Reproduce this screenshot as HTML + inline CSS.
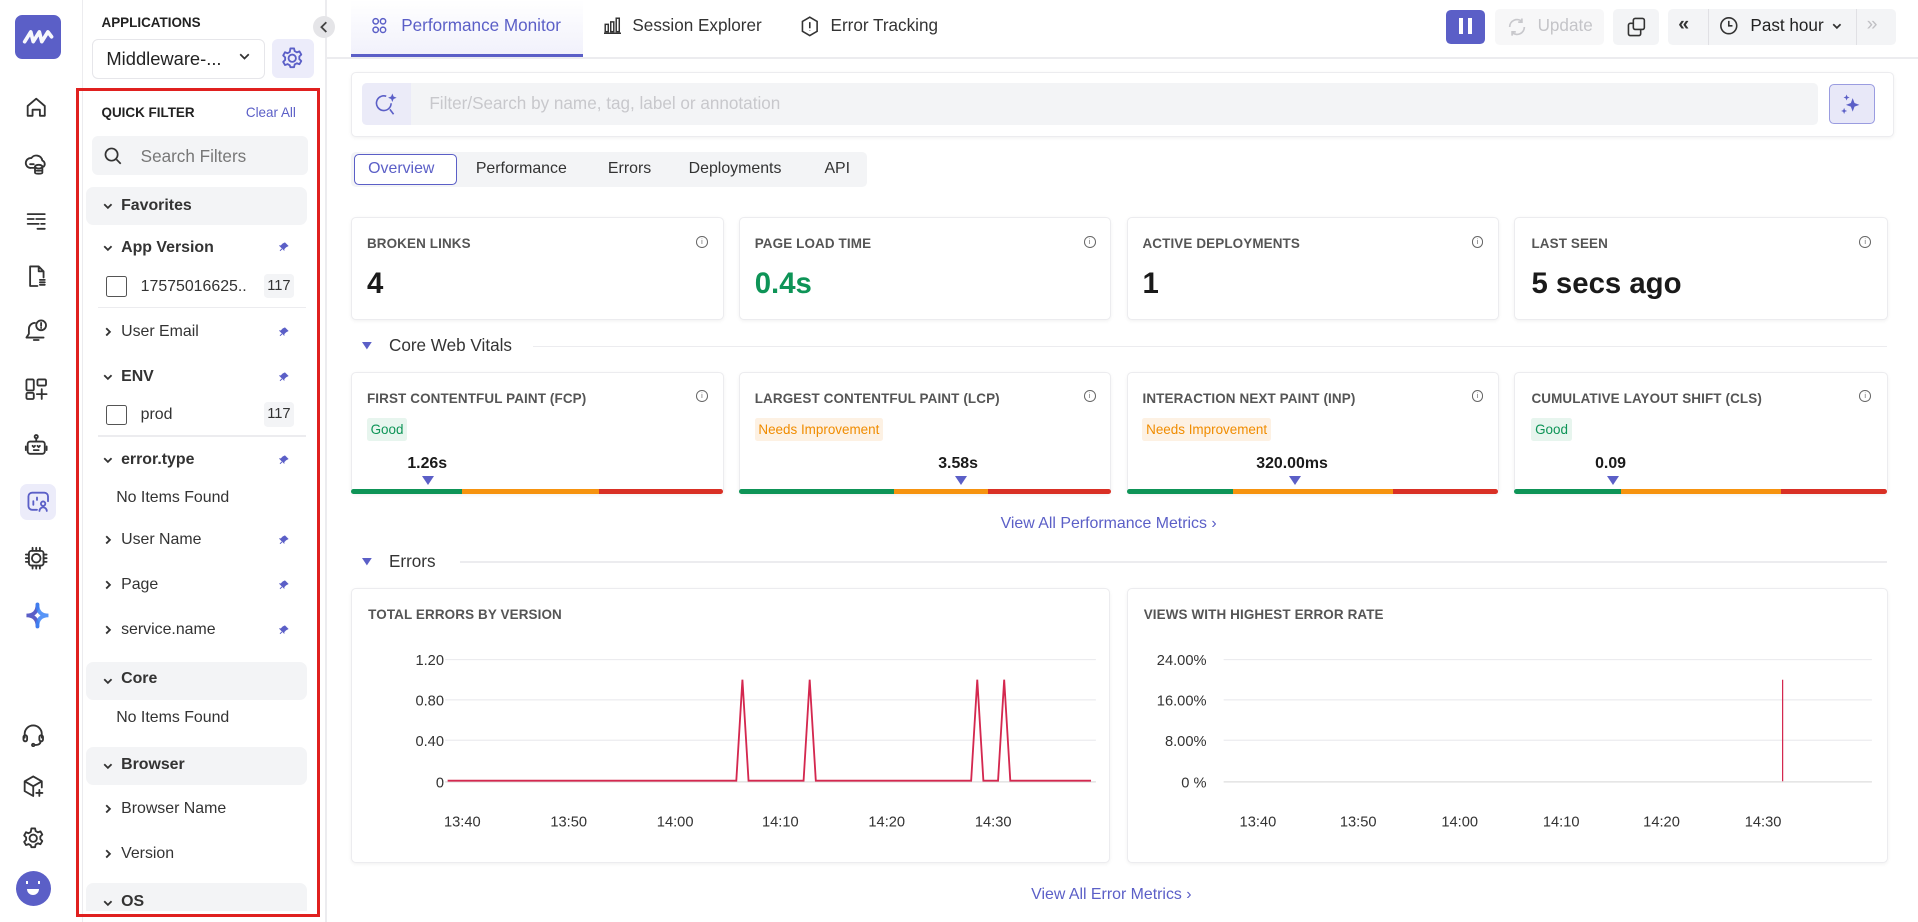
<!DOCTYPE html>
<html><head><meta charset="utf-8">
<style>
html,body{margin:0;padding:0;width:1918px;height:922px;overflow:hidden;background:#fff}
#root{position:relative;width:1568px;height:754px;zoom:1.22321;font-family:"Liberation Sans",sans-serif;color:#222;}
.a{position:absolute}
.t{position:absolute;white-space:nowrap}
.ic{position:absolute;width:20px;height:20px}
.ic svg{width:20px;height:20px;fill:none;stroke:#333;stroke-width:1.5;stroke-linecap:round;stroke-linejoin:round}
.card{position:absolute;background:#fff;border:1px solid #ececef;border-radius:4px;box-shadow:0 1px 3px rgba(0,0,0,0.05)}
.lbl{position:absolute;font-size:11px;font-weight:bold;color:#555;letter-spacing:0.1px}
.info{position:absolute;width:8px;height:8px;border:1px solid #666;border-radius:50%;font-size:6px;line-height:8px;text-align:center;color:#666}
.val{position:absolute;font-size:24px;font-weight:bold;color:#1a1a1a}
.grp{position:absolute;left:70px;width:181px;height:31px;background:#f3f4f6;border-radius:6px}
.fi{position:absolute;font-size:13px;color:#333}
.fb{font-weight:bold}
.chev{position:absolute;font-size:11px;color:#333}
.pin{position:absolute;left:228px;width:8px;height:8px}
.badge{position:absolute;font-size:11px;padding:3px 3px;border-radius:2px}
.bar{position:absolute;height:4px;top:400px}
.mk{position:absolute;top:389px;width:0;height:0;border-left:5px solid transparent;border-right:5px solid transparent;border-top:8px solid #5b5fc7}
.mv{position:absolute;top:372px;font-size:13px;font-weight:bold;color:#1a1a1a}
</style></head><body><div id="root">

<!-- icon bar -->
<div class="a" style="left:67px;top:0;width:1px;height:754px;background:#ececef"></div>
<div class="a" style="left:12px;top:12px;width:38px;height:36px;background:#5b5fc7;border-radius:6px"></div>
<svg class="a" style="left:17px;top:22px" width="28" height="16" viewBox="0 0 28 16"><path d="M3 12 L8 4 L10 12 L15 4 L17 12 L22 4 L25 8" fill="none" stroke="#fff" stroke-width="3" stroke-linecap="round" stroke-linejoin="round" opacity="0.95"/></svg>

<div class="ic" style="left:20px;top:78px"><svg viewBox="0 0 20 20"><path d="M3 17V9l7-6 7 6v8h-4v-5H7v5z"/></svg></div>
<div class="ic" style="left:20px;top:124px"><svg viewBox="0 0 20 20"><path d="M5 13a4 4 0 0 1 1-8 5 5 0 0 1 9 2 3 3 0 0 1 1 5"/><ellipse cx="12" cy="12" rx="3" ry="1.5"/><path d="M9 12v5c0 1 6 1 6 0v-5M9 14.5c0 1 6 1 6 0M5 10h3M5 13h3"/></svg></div>
<div class="ic" style="left:20px;top:170px"><svg viewBox="0 0 20 20"><path d="M3 5h14M3 9h5M10 9h7M3 13h9M14 13h3M11 17h6"/></svg></div>
<div class="ic" style="left:20px;top:216px"><svg viewBox="0 0 20 20"><path d="M12 2H5v16h6M12 2l4 4v5M12 2v4h4M13 13h4M13 15h4M13 17h4"/></svg></div>
<div class="ic" style="left:20px;top:260px"><svg viewBox="0 0 20 20"><path d="M9 4a5 5 0 0 0-5 5v4l-2 3h14M8 18h4"/><circle cx="14" cy="6" r="4"/><path d="M14 4v2.5M14 8v.2"/></svg></div>
<div class="ic" style="left:20px;top:308px"><svg viewBox="0 0 20 20"><rect x="2" y="2" width="6" height="9" rx="1"/><rect x="2" y="13" width="6" height="5" rx="1"/><rect x="11" y="2" width="7" height="5" rx="1"/><path d="M14.5 10v8M10.5 14h8"/></svg></div>
<div class="ic" style="left:20px;top:354px"><svg viewBox="0 0 20 20"><rect x="3" y="7" width="14" height="10" rx="2"/><circle cx="10" cy="3" r="1.3"/><path d="M10 4.3V7M1.5 11v3M18.5 11v3M7 10.5l1 1 1-1M11 10.5l1 1 1-1M8 14h4"/></svg></div>
<div class="a" style="left:16px;top:396px;width:30px;height:29px;background:#ececfa;border-radius:6px"></div>
<div class="ic" style="left:21px;top:400px"><svg viewBox="0 0 20 20" style="stroke:#5b5fc7"><path d="M9 17H5a3 3 0 0 1-3-3V6a3 3 0 0 1 3-3h10a3 3 0 0 1 3 3v4"/><path d="M6 10v3M9 7v2"/><circle cx="14" cy="12" r="1.8"/><path d="M11 18a3 3 0 0 1 6 0"/></svg></div>
<div class="ic" style="left:20px;top:446px"><svg viewBox="0 0 20 20"><rect x="4" y="4" width="12" height="12" rx="2"/><circle cx="10" cy="10" r="3.5"/><path d="M7 1.5V4M10 1.5V4M13 1.5V4M7 16v2.5M10 16v2.5M13 16v2.5M1.5 7H4M1.5 10H4M1.5 13H4M16 7h2.5M16 10h2.5M16 13h2.5"/></svg></div>
<svg class="a" style="left:20px;top:492px" width="22" height="22" viewBox="0 0 22 22"><path d="M11 2 C11 8 8 11 2 11 C8 11 11 14 11 20" fill="none" stroke="#5b5fc7" stroke-width="3" stroke-linecap="round"/><path d="M11 2 C11 8 14 11 20 11 C14 11 11 14 11 20" fill="none" stroke="#3b82f6" stroke-width="3" stroke-linecap="round" opacity="0.85"/></svg>

<div class="ic" style="left:17px;top:591px"><svg viewBox="0 0 20 20"><path d="M3 12V9a7 7 0 0 1 14 0v3"/><rect x="2" y="10" width="3" height="5" rx="1.5"/><rect x="15" y="10" width="3" height="5" rx="1.5"/><path d="M16 15c0 2-2 3-5 3"/><circle cx="10" cy="18" r="1"/></svg></div>
<div class="ic" style="left:17px;top:633px"><svg viewBox="0 0 20 20"><path d="M10 2l7 4v5M10 2L3 6v8l7 4M3 6l7 4 7-4M10 10v8M15 13v5M12.5 15.5h5"/></svg></div>
<div class="ic" style="left:17px;top:675px"><svg viewBox="0 0 20 20"><circle cx="10" cy="10" r="3"/><path d="M8.5 2h3l.5 2.2 1.8 1 2.1-.8 1.5 2.6-1.6 1.6v2.1l1.6 1.6-1.5 2.6-2.1-.8-1.8 1-.5 2.2h-3L8 15.8l-1.8-1-2.1.8-1.5-2.6 1.6-1.6V9.3L2.6 7.7 4.1 5.1l2.1.8 1.8-1z"/></svg></div>
<div class="a" style="left:13px;top:712px;width:29px;height:29px;background:#5b5fc7;border-radius:50%"></div>
<div class="a" style="left:22px;top:727px;width:10px;height:5px;background:#fff;border-radius:0 0 6px 6px"></div>
<div class="a" style="left:21px;top:720px;width:2px;height:3px;background:#fff"></div><div class="a" style="left:31px;top:720px;width:2px;height:3px;background:#fff"></div>

<!-- filter panel -->
<div class="a" style="left:266px;top:0;width:1px;height:754px;background:#ececef"></div>
<div class="t" style="left:83px;top:12px;font-size:11px;font-weight:bold;color:#222">APPLICATIONS</div>
<div class="a" style="left:75px;top:32px;width:140px;height:31px;border:1px solid #e6e6ea;border-radius:5px;background:#fff"></div>
<div class="t" style="left:87px;top:39px;font-size:15px;color:#222">Middleware-...</div>
<svg class="a" style="left:195px;top:43px" width="9" height="6" viewBox="0 0 9 6"><path d="M1 1l3.5 3.5L8 1" fill="none" stroke="#333" stroke-width="1.4"/></svg>
<div class="a" style="left:222px;top:32px;width:35px;height:32px;background:#ececfa;border-radius:5px"></div>
<div class="ic" style="left:229px;top:38px"><svg viewBox="0 0 20 20" style="stroke:#5b5fc7"><circle cx="10" cy="10" r="3"/><path d="M8.5 2h3l.5 2.2 1.8 1 2.1-.8 1.5 2.6-1.6 1.6v2.1l1.6 1.6-1.5 2.6-2.1-.8-1.8 1-.5 2.2h-3L8 15.8l-1.8-1-2.1.8-1.5-2.6 1.6-1.6V9.3L2.6 7.7 4.1 5.1l2.1.8 1.8-1z"/></svg></div>
<div class="a" style="left:256px;top:13px;width:18px;height:18px;background:#e5e5e8;border-radius:50%"></div>
<svg class="a" style="left:261px;top:17px" width="8" height="10" viewBox="0 0 8 10"><path d="M6 1L2 5l4 4" fill="none" stroke="#444" stroke-width="1.5"/></svg>

<div class="a" style="left:62px;top:72px;width:195px;height:673px;border:3px solid #e0201f"></div>
<div class="t" style="left:83px;top:86px;font-size:11px;font-weight:bold;color:#222">QUICK FILTER</div>
<div class="t" style="left:201px;top:86px;font-size:11px;color:#5b5fc7">Clear All</div>
<div class="a" style="left:75px;top:111px;width:177px;height:32px;background:#f3f4f6;border-radius:5px"></div>
<svg class="a" style="left:84px;top:119px" width="16" height="16" viewBox="0 0 16 16"><circle cx="7" cy="7" r="5" fill="none" stroke="#333" stroke-width="1.4"/><path d="M11 11l3.5 3.5" stroke="#333" stroke-width="1.4"/></svg>
<div class="t" style="left:115px;top:120px;font-size:14px;color:#777">Search Filters</div>

<div class="grp" style="top:153px"></div>
<svg class="a" style="left:84px;top:166px" width="8" height="6" viewBox="0 0 8 6"><path d="M1 1l3 3 3-3" fill="none" stroke="#333" stroke-width="1.5"/></svg>
<div class="fi fb" style="left:99px;top:161px">Favorites</div>

<svg class="a" style="left:84px;top:200px" width="8" height="6" viewBox="0 0 8 6"><path d="M1 1l3 3 3-3" fill="none" stroke="#333" stroke-width="1.5"/></svg>
<div class="fi fb" style="left:99px;top:195px">App Version</div>
<div class="a" style="left:87px;top:226px;width:15px;height:15px;border:1px solid #555;border-radius:2px"></div>
<div class="fi" style="left:115px;top:227px">17575016625..</div>
<div class="a" style="left:216px;top:224px;width:24px;height:20px;background:#f3f4f6;border-radius:3px;font-size:12px;line-height:20px;text-align:center;color:#333">117</div>
<div class="a" style="left:80px;top:251px;width:170px;height:1px;background:#ececef"></div>

<svg class="a" style="left:86px;top:267px" width="6" height="8" viewBox="0 0 6 8"><path d="M1 1l3 3-3 3" fill="none" stroke="#333" stroke-width="1.5"/></svg>
<div class="fi" style="left:99px;top:264px">User Email</div>
<svg class="a" style="left:84px;top:306px" width="8" height="6" viewBox="0 0 8 6"><path d="M1 1l3 3 3-3" fill="none" stroke="#333" stroke-width="1.5"/></svg>
<div class="fi fb" style="left:99px;top:301px">ENV</div>
<div class="a" style="left:87px;top:331px;width:15px;height:15px;border:1px solid #555;border-radius:2px"></div>
<div class="fi" style="left:115px;top:332px">prod</div>
<div class="a" style="left:216px;top:329px;width:24px;height:20px;background:#f3f4f6;border-radius:3px;font-size:12px;line-height:20px;text-align:center;color:#333">117</div>
<div class="a" style="left:80px;top:356px;width:170px;height:1px;background:#ececef"></div>
<svg class="a" style="left:84px;top:374px" width="8" height="6" viewBox="0 0 8 6"><path d="M1 1l3 3 3-3" fill="none" stroke="#333" stroke-width="1.5"/></svg>
<div class="fi fb" style="left:99px;top:369px">error.type</div>
<div class="fi" style="left:95px;top:400px">No Items Found</div>
<svg class="a" style="left:86px;top:437px" width="6" height="8" viewBox="0 0 6 8"><path d="M1 1l3 3-3 3" fill="none" stroke="#333" stroke-width="1.5"/></svg>
<div class="fi" style="left:99px;top:434px">User Name</div>
<svg class="a" style="left:86px;top:474px" width="6" height="8" viewBox="0 0 6 8"><path d="M1 1l3 3-3 3" fill="none" stroke="#333" stroke-width="1.5"/></svg>
<div class="fi" style="left:99px;top:471px">Page</div>
<svg class="a" style="left:86px;top:511px" width="6" height="8" viewBox="0 0 6 8"><path d="M1 1l3 3-3 3" fill="none" stroke="#333" stroke-width="1.5"/></svg>
<div class="fi" style="left:99px;top:508px">service.name</div>

<svg class="pin" style="top:198px" viewBox="0 0 10 10"><path d="M6 1l3 3-2 1-2 2 0 1-4-4 1 0 2-2z M3 7L1 9" fill="#5b5fc7" stroke="#5b5fc7" stroke-width="1"/></svg>
<svg class="pin" style="top:267px" viewBox="0 0 10 10"><path d="M6 1l3 3-2 1-2 2 0 1-4-4 1 0 2-2z M3 7L1 9" fill="#5b5fc7" stroke="#5b5fc7" stroke-width="1"/></svg>
<svg class="pin" style="top:304px" viewBox="0 0 10 10"><path d="M6 1l3 3-2 1-2 2 0 1-4-4 1 0 2-2z M3 7L1 9" fill="#5b5fc7" stroke="#5b5fc7" stroke-width="1"/></svg>
<svg class="pin" style="top:372px" viewBox="0 0 10 10"><path d="M6 1l3 3-2 1-2 2 0 1-4-4 1 0 2-2z M3 7L1 9" fill="#5b5fc7" stroke="#5b5fc7" stroke-width="1"/></svg>
<svg class="pin" style="top:437px" viewBox="0 0 10 10"><path d="M6 1l3 3-2 1-2 2 0 1-4-4 1 0 2-2z M3 7L1 9" fill="#5b5fc7" stroke="#5b5fc7" stroke-width="1"/></svg>
<svg class="pin" style="top:474px" viewBox="0 0 10 10"><path d="M6 1l3 3-2 1-2 2 0 1-4-4 1 0 2-2z M3 7L1 9" fill="#5b5fc7" stroke="#5b5fc7" stroke-width="1"/></svg>
<svg class="pin" style="top:511px" viewBox="0 0 10 10"><path d="M6 1l3 3-2 1-2 2 0 1-4-4 1 0 2-2z M3 7L1 9" fill="#5b5fc7" stroke="#5b5fc7" stroke-width="1"/></svg>

<div class="grp" style="top:541px"></div>
<svg class="a" style="left:84px;top:554px" width="8" height="6" viewBox="0 0 8 6"><path d="M1 1l3 3 3-3" fill="none" stroke="#333" stroke-width="1.5"/></svg>
<div class="fi fb" style="left:99px;top:548px">Core</div>
<div class="fi" style="left:95px;top:580px">No Items Found</div>
<div class="grp" style="top:611px"></div>
<svg class="a" style="left:84px;top:624px" width="8" height="6" viewBox="0 0 8 6"><path d="M1 1l3 3 3-3" fill="none" stroke="#333" stroke-width="1.5"/></svg>
<div class="fi fb" style="left:99px;top:618px">Browser</div>
<svg class="a" style="left:86px;top:657px" width="6" height="8" viewBox="0 0 6 8"><path d="M1 1l3 3-3 3" fill="none" stroke="#333" stroke-width="1.5"/></svg>
<div class="fi" style="left:99px;top:654px">Browser Name</div>
<svg class="a" style="left:86px;top:694px" width="6" height="8" viewBox="0 0 6 8"><path d="M1 1l3 3-3 3" fill="none" stroke="#333" stroke-width="1.5"/></svg>
<div class="fi" style="left:99px;top:691px">Version</div>
<div class="grp" style="top:722px;height:23px;border-radius:6px 6px 0 0"></div>
<svg class="a" style="left:84px;top:736px" width="8" height="6" viewBox="0 0 8 6"><path d="M1 1l3 3 3-3" fill="none" stroke="#333" stroke-width="1.5"/></svg>
<div class="fi fb" style="left:99px;top:730px">OS</div>

<!-- top tabs -->
<div class="a" style="left:267px;top:47px;width:1301px;height:1px;background:#ececef"></div>
<div class="a" style="left:287px;top:0;width:190px;height:45px;background:linear-gradient(#fff,#f1f1fb)"></div>
<div class="a" style="left:287px;top:44px;width:190px;height:3px;background:#5b5fc7"></div>
<svg class="a" style="left:304px;top:14px" width="12" height="14" viewBox="0 0 12 14"><g fill="none" stroke="#5b5fc7" stroke-width="1.2"><circle cx="3" cy="3.5" r="2.2"/><circle cx="9" cy="3.5" r="2.2"/><circle cx="3" cy="10.5" r="2.2"/><circle cx="9" cy="10.5" r="2.2"/></g></svg>
<div class="t" style="left:328px;top:13px;font-size:14px;color:#5b5fc7">Performance Monitor</div>
<svg class="a" style="left:494px;top:14px" width="14" height="14" viewBox="0 0 14 14"><g fill="none" stroke="#333" stroke-width="1.2"><rect x="1" y="6" width="2.5" height="6"/><rect x="5.5" y="4" width="2.5" height="8"/><rect x="10" y="1" width="2.5" height="11"/><path d="M0 13.3h14"/></g></svg>
<div class="t" style="left:517px;top:13px;font-size:14px;color:#333">Session Explorer</div>
<svg class="a" style="left:654px;top:13px" width="16" height="17" viewBox="0 0 16 17"><g fill="none" stroke="#333" stroke-width="1.3"><path d="M8 1l6 3.5v8L8 16l-6-3.5v-8z"/><path d="M8 5v5M8 12v.3"/></g></svg>
<div class="t" style="left:679px;top:13px;font-size:14px;color:#333">Error Tracking</div>

<div class="a" style="left:1182px;top:8px;width:32px;height:28px;background:#5b5fc7;border-radius:4px"></div>
<div class="a" style="left:1193px;top:15px;width:3px;height:13px;background:#fff"></div><div class="a" style="left:1200px;top:15px;width:3px;height:13px;background:#fff"></div>
<div class="a" style="left:1222px;top:7px;width:89px;height:30px;background:#f7f7f8;border-radius:4px"></div>
<svg class="a" style="left:1231px;top:13px" width="18" height="18" viewBox="0 0 18 18"><g fill="none" stroke="#c8c8cc" stroke-width="1.4"><path d="M3 9a6 6 0 0 1 10-4.5M15 9a6 6 0 0 1-10 4.5M13 2v3h-3M5 16v-3h3"/></g></svg>
<div class="t" style="left:1257px;top:13px;font-size:14px;color:#c4c4c8">Update</div>
<div class="a" style="left:1319px;top:7px;width:37px;height:30px;background:#f3f4f6;border-radius:4px"></div>
<svg class="a" style="left:1329px;top:13px" width="18" height="18" viewBox="0 0 18 18"><g fill="none" stroke="#333" stroke-width="1.3"><rect x="6" y="2" width="9" height="9" rx="1.5"/><path d="M6 6H3.5A1.5 1.5 0 0 0 2 7.5v7A1.5 1.5 0 0 0 3.5 16h7a1.5 1.5 0 0 0 1.5-1.5V11"/></g></svg>
<div class="a" style="left:1364px;top:7px;width:186px;height:30px;background:#f3f4f6;border-radius:4px"></div>
<div class="a" style="left:1396px;top:7px;width:1px;height:30px;background:#e0e0e4"></div>
<div class="a" style="left:1517px;top:7px;width:1px;height:30px;background:#e0e0e4"></div>
<div class="t" style="left:1372px;top:11px;font-size:16px;font-weight:bold;color:#333">«</div>
<svg class="a" style="left:1405px;top:13px" width="16" height="16" viewBox="0 0 16 16"><g fill="none" stroke="#333" stroke-width="1.3"><circle cx="8" cy="8" r="6.5"/><path d="M8 4v4h3"/></g></svg>
<div class="t" style="left:1431px;top:13px;font-size:14px;color:#222">Past hour</div>
<svg class="a" style="left:1498px;top:19px" width="8" height="6" viewBox="0 0 8 6"><path d="M1 1l3 3 3-3" fill="none" stroke="#333" stroke-width="1.4"/></svg>
<div class="t" style="left:1526px;top:11px;font-size:16px;color:#c0c0c4">»</div>

<!-- filter search -->
<div class="card" style="left:287px;top:59px;width:1260px;height:51px"></div>
<div class="a" style="left:296px;top:68px;width:1190px;height:34px;background:#f3f4f6;border-radius:4px"></div>
<div class="a" style="left:296px;top:68px;width:40px;height:34px;background:#ebebf8;border-radius:4px 0 0 4px"></div>
<svg class="a" style="left:306px;top:74px" width="22" height="22" viewBox="0 0 22 22"><g fill="none" stroke="#5b5fc7" stroke-width="1.3"><path d="M14 10a6 6 0 1 1-4-5.7"/><path d="M13 15l3 4"/></g><path d="M15 2l1 2.5 2.5 1-2.5 1-1 2.5-1-2.5-2.5-1 2.5-1z" fill="#5b5fc7"/></svg>
<div class="t" style="left:351px;top:77px;font-size:14px;color:#c8c8cc">Filter/Search by name, tag, label or annotation</div>
<div class="a" style="left:1495px;top:69px;width:36px;height:31px;background:#e8e8f8;border:1px solid #9a9ce0;border-radius:4px"></div>
<svg class="a" style="left:1503px;top:75px" width="20" height="20" viewBox="0 0 20 20" fill="#5b5fc7"><path d="M12 5l1.5 4 4 1.5-4 1.5-1.5 4-1.5-4-4-1.5 4-1.5z"/><path d="M7 2l.7 1.8 1.8.7-1.8.7L7 7l-.7-1.8-1.8-.7 1.8-.7z"/><path d="M5 13l.7 1.8 1.8.7-1.8.7L5 18l-.7-1.8-1.8-.7 1.8-.7z"/></svg>

<!-- sub tabs -->
<div class="a" style="left:287px;top:124px;width:422px;height:29px;background:#f3f4f6;border-radius:4px"></div>
<div class="a" style="left:289px;top:126px;width:83px;height:24px;background:#fff;border:1px solid #5b5fc7;border-radius:4px"></div>
<div class="t" style="left:301px;top:131px;font-size:13px;color:#5b5fc7">Overview</div>
<div class="t" style="left:389px;top:131px;font-size:13px;color:#333">Performance</div>
<div class="t" style="left:497px;top:131px;font-size:13px;color:#333">Errors</div>
<div class="t" style="left:563px;top:131px;font-size:13px;color:#333">Deployments</div>
<div class="t" style="left:674px;top:131px;font-size:13px;color:#333">API</div>

<!-- metric cards -->
<div class="card" style="left:287px;top:177px;width:303px;height:83px"></div>
<div class="card" style="left:604px;top:177px;width:303px;height:83px"></div>
<div class="card" style="left:921px;top:177px;width:303px;height:83px"></div>
<div class="card" style="left:1238px;top:177px;width:304px;height:83px"></div>
<div class="lbl" style="left:300px;top:193px">BROKEN LINKS</div><div class="info" style="left:569px;top:193px">i</div><div class="val" style="left:300px;top:218px">4</div>
<div class="lbl" style="left:617px;top:193px">PAGE LOAD TIME</div><div class="info" style="left:886px;top:193px">i</div><div class="val" style="left:617px;top:218px;color:#0e9457">0.4s</div>
<div class="lbl" style="left:934px;top:193px">ACTIVE DEPLOYMENTS</div><div class="info" style="left:1203px;top:193px">i</div><div class="val" style="left:934px;top:218px">1</div>
<div class="lbl" style="left:1252px;top:193px">LAST SEEN</div><div class="info" style="left:1520px;top:193px">i</div><div class="val" style="left:1252px;top:218px">5 secs ago</div>

<!-- Core web vitals -->
<svg class="a" style="left:296px;top:280px" width="8" height="7" viewBox="0 0 8 7"><path d="M0 0h8L4 6z" fill="#5b5fc7"/></svg>
<div class="t" style="left:318px;top:275px;font-size:14px;color:#333">Core Web Vitals</div>
<div class="a" style="left:436px;top:283px;width:1107px;height:1px;background:#ececef"></div>

<div class="card" style="left:287px;top:304px;width:303px;height:98px"></div>
<div class="card" style="left:604px;top:304px;width:303px;height:98px"></div>
<div class="card" style="left:921px;top:304px;width:303px;height:98px"></div>
<div class="card" style="left:1238px;top:304px;width:304px;height:98px"></div>
<div class="lbl" style="left:300px;top:320px">FIRST CONTENTFUL PAINT (FCP)</div><div class="info" style="left:569px;top:319px">i</div>
<div class="lbl" style="left:617px;top:320px">LARGEST CONTENTFUL PAINT (LCP)</div><div class="info" style="left:886px;top:319px">i</div>
<div class="lbl" style="left:934px;top:320px">INTERACTION NEXT PAINT (INP)</div><div class="info" style="left:1203px;top:319px">i</div>
<div class="lbl" style="left:1252px;top:320px">CUMULATIVE LAYOUT SHIFT (CLS)</div><div class="info" style="left:1520px;top:319px">i</div>
<div class="badge" style="left:300px;top:342px;background:#e7f5ee;color:#0e9457">Good</div>
<div class="badge" style="left:617px;top:342px;background:#fdf1e3;color:#f08c00">Needs Improvement</div>
<div class="badge" style="left:934px;top:342px;background:#fdf1e3;color:#f08c00">Needs Improvement</div>
<div class="badge" style="left:1252px;top:342px;background:#e7f5ee;color:#0e9457">Good</div>
<div class="mv" style="left:333px">1.26s</div><div class="mk" style="left:345px"></div>
<div class="mv" style="left:767px">3.58s</div><div class="mk" style="left:781px"></div>
<div class="mv" style="left:1027px">320.00ms</div><div class="mk" style="left:1054px"></div>
<div class="mv" style="left:1304px">0.09</div><div class="mk" style="left:1314px"></div>
<div class="bar" style="left:287px;width:91px;background:#0e9457;border-radius:2px 0 0 2px"></div><div class="bar" style="left:378px;width:112px;background:#f6930f"></div><div class="bar" style="left:490px;width:101px;background:#d93025;border-radius:0 2px 2px 0"></div>
<div class="bar" style="left:604px;width:127px;background:#0e9457;border-radius:2px 0 0 2px"></div><div class="bar" style="left:731px;width:77px;background:#f6930f"></div><div class="bar" style="left:808px;width:100px;background:#d93025;border-radius:0 2px 2px 0"></div>
<div class="bar" style="left:921px;width:87px;background:#0e9457;border-radius:2px 0 0 2px"></div><div class="bar" style="left:1008px;width:131px;background:#f6930f"></div><div class="bar" style="left:1139px;width:86px;background:#d93025;border-radius:0 2px 2px 0"></div>
<div class="bar" style="left:1238px;width:87px;background:#0e9457;border-radius:2px 0 0 2px"></div><div class="bar" style="left:1325px;width:131px;background:#f6930f"></div><div class="bar" style="left:1456px;width:87px;background:#d93025;border-radius:0 2px 2px 0"></div>

<div class="t" style="left:818px;top:421px;font-size:13px;color:#5b5fc7">View All Performance Metrics ›</div>

<!-- Errors -->
<svg class="a" style="left:296px;top:456px" width="8" height="7" viewBox="0 0 8 7"><path d="M0 0h8L4 6z" fill="#5b5fc7"/></svg>
<div class="t" style="left:318px;top:451px;font-size:14px;color:#333">Errors</div>
<div class="a" style="left:376px;top:459px;width:1167px;height:1px;background:#ececef"></div>

<div class="card" style="left:287px;top:481px;width:619px;height:223px"></div>
<div class="card" style="left:921px;top:481px;width:621px;height:223px"></div>
<div class="lbl" style="left:301px;top:496px">TOTAL ERRORS BY VERSION</div>
<div class="lbl" style="left:935px;top:496px">VIEWS WITH HIGHEST ERROR RATE</div>

<svg class="a" style="left:287px;top:481px" width="620" height="224" viewBox="287 481 620 224" font-family="Liberation Sans, sans-serif" font-size="12" fill="#333">
<g stroke="#ececef" stroke-width="1"><path d="M364 539.5H896M364 572.5H896M364 605.5H896"/><path d="M364 639.5H896" stroke="#ddd"/></g>
<text x="363" y="544" text-anchor="end">1.20</text><text x="363" y="577" text-anchor="end">0.80</text><text x="363" y="610" text-anchor="end">0.40</text><text x="363" y="644" text-anchor="end">0</text>
<path d="M366 638.5H602L607 556L612 638.5H657L662 556L667 638.5H794L799 556L804 638.5H816L821 556L826 638.5H892" fill="none" stroke="#d4284f" stroke-width="1.5"/>
<g text-anchor="middle"><text x="378" y="676">13:40</text><text x="465" y="676">13:50</text><text x="552" y="676">14:00</text><text x="638" y="676">14:10</text><text x="725" y="676">14:20</text><text x="812" y="676">14:30</text></g>
</svg>
<svg class="a" style="left:921px;top:481px" width="622" height="224" viewBox="921 481 622 224" font-family="Liberation Sans, sans-serif" font-size="12" fill="#333">
<g stroke="#ececef" stroke-width="1"><path d="M1000 539.5H1530M1000 572.5H1530M1000 605.5H1530"/><path d="M1000 639.5H1530" stroke="#ddd"/></g>
<text x="986" y="544" text-anchor="end">24.00%</text><text x="986" y="577" text-anchor="end">16.00%</text><text x="986" y="610" text-anchor="end">8.00%</text><text x="986" y="644" text-anchor="end">0 %</text>
<path d="M1457 556V639" stroke="#d4284f" stroke-width="1"/>
<g text-anchor="middle"><text x="1028" y="676">13:40</text><text x="1110" y="676">13:50</text><text x="1193" y="676">14:00</text><text x="1276" y="676">14:10</text><text x="1358" y="676">14:20</text><text x="1441" y="676">14:30</text></g>
</svg>

<div class="t" style="left:843px;top:724px;font-size:13px;color:#5b5fc7">View All Error Metrics ›</div>
</div></body></html>
